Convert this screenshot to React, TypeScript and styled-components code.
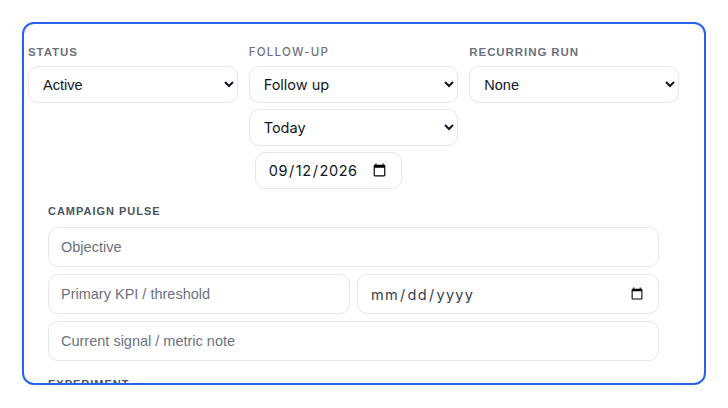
import React from "react";
import styled, { createGlobalStyle } from "styled-components";

const GlobalStyle = createGlobalStyle`
  html, body {
    margin: 0;
    padding: 0;
    background: #ffffff;
  }
  body {
    font-family: "Liberation Sans", Arial, sans-serif;
  }
`;

const Page = styled.div`
  width: 728px;
  height: 408px;
  padding: 22px 0 0 22px;
  box-sizing: border-box;
`;

const Card = styled.div`
  width: 684px;
  height: 363px;
  box-sizing: border-box;
  border: 2px solid #2563eb;
  border-radius: 12px;
  padding: 21px 0 0 4px;
  overflow: hidden;
  background: #fff;
`;

const TopGrid = styled.div`
  display: grid;
  grid-template-columns: repeat(3, 1fr);
  column-gap: 11px;
  width: 651px;
  align-items: start;
`;

const Field = styled.div`
  display: flex;
  flex-direction: column;
  align-items: flex-start;
`;

const Label = styled.div<{ $inter?: boolean }>`
  font-family: ${(p) =>
    p.$inter ? `Inter, "Liberation Sans", sans-serif` : `"Liberation Sans", Arial, sans-serif`};
  font-size: 11.5px;
  line-height: 14px;
  font-weight: ${(p) => (p.$inter ? 500 : 700)};
  letter-spacing: ${(p) => (p.$inter ? "0.11em" : "0.08em")};
  color: #6b7280;
  text-transform: uppercase;
  margin-bottom: 7px;
`;

const Select = styled.select<{ $inter?: boolean }>`
  width: 100%;
  height: 37px;
  box-sizing: border-box;
  border: 1px solid #e5e7eb;
  border-radius: 10px;
  background: #fff;
  padding: 0 8px 0 10px;
  font-family: ${(p) =>
    p.$inter ? `Inter, "Liberation Sans", sans-serif` : `"Liberation Sans", Arial, sans-serif`};
  font-size: 14.5px;
  color: #111827;
  outline: none;
  & + & {
    margin-top: 6px;
  }
`;

const DateBox = styled.input<{ $width?: string; $muted?: boolean }>`
  width: ${(p) => p.$width || "100%"};
  height: ${(p) => (p.$width ? "37px" : "40px")};
  box-sizing: border-box;
  border: 1px solid #e5e7eb;
  border-radius: 10px;
  background: #fff;
  padding: 0 12px;
  font-family: Inter, "Liberation Sans", sans-serif;
  font-size: 14.5px;
  letter-spacing: ${(p) => (p.$muted ? "0.09em" : "0.04em")};
  color: ${(p) => (p.$muted ? "#374151" : "#111827")};
  outline: none;
`;

const FollowDate = styled.div`
  margin: 6px 0 0 6px;
`;

const Section = styled.div`
  margin: 15px 0 0 20px;
  width: 611px;
`;

const SectionLabel = styled.div`
  font-family: "Liberation Sans", Arial, sans-serif;
  font-size: 11px;
  line-height: 14px;
  font-weight: 700;
  letter-spacing: 0.09em;
  color: #4b5563;
  text-transform: uppercase;
  margin-bottom: 9px;
`;

const Stack = styled.div`
  display: flex;
  flex-direction: column;
  gap: 7px;
`;

const Row = styled.div`
  display: grid;
  grid-template-columns: 1fr 1fr;
  gap: 7px;
`;

const TextInput = styled.input`
  width: 100%;
  height: 40px;
  box-sizing: border-box;
  border: 1px solid #e5e7eb;
  border-radius: 10px;
  background: #fff;
  padding: 0 12px;
  font-family: "Liberation Sans", Arial, sans-serif;
  font-size: 14.5px;
  color: #111827;
  outline: none;
  &::placeholder {
    color: #6b7280;
  }
`;

const NextSection = styled.div`
  margin: 16px 0 0 20px;
`;

export default function App() {
  return (
    <>
      <GlobalStyle />
      <Page>
        <Card>
          <TopGrid>
            <Field>
              <Label>Status</Label>
              <Select defaultValue="active">
                <option value="active">Active</option>
                <option value="paused">Paused</option>
                <option value="done">Done</option>
              </Select>
            </Field>
            <Field>
              <Label $inter>Follow-up</Label>
              <Select $inter defaultValue="follow">
                <option value="follow">Follow up</option>
                <option value="none">No follow up</option>
              </Select>
              <Select $inter defaultValue="today">
                <option value="today">Today</option>
                <option value="tomorrow">Tomorrow</option>
                <option value="week">Next week</option>
              </Select>
              <FollowDate>
                <DateBox type="date" $width="147px" defaultValue="2026-09-12" />
              </FollowDate>
            </Field>
            <Field>
              <Label>Recurring run</Label>
              <Select defaultValue="none">
                <option value="none">None</option>
                <option value="daily">Daily</option>
                <option value="weekly">Weekly</option>
              </Select>
            </Field>
          </TopGrid>

          <Section>
            <SectionLabel>Campaign pulse</SectionLabel>
            <Stack>
              <TextInput placeholder="Objective" />
              <Row>
                <TextInput placeholder="Primary KPI / threshold" />
                <DateBox type="date" $muted />
              </Row>
              <TextInput placeholder="Current signal / metric note" />
            </Stack>
          </Section>
          <NextSection>
            <SectionLabel>Experiment</SectionLabel>
          </NextSection>
        </Card>
      </Page>
    </>
  );
}
